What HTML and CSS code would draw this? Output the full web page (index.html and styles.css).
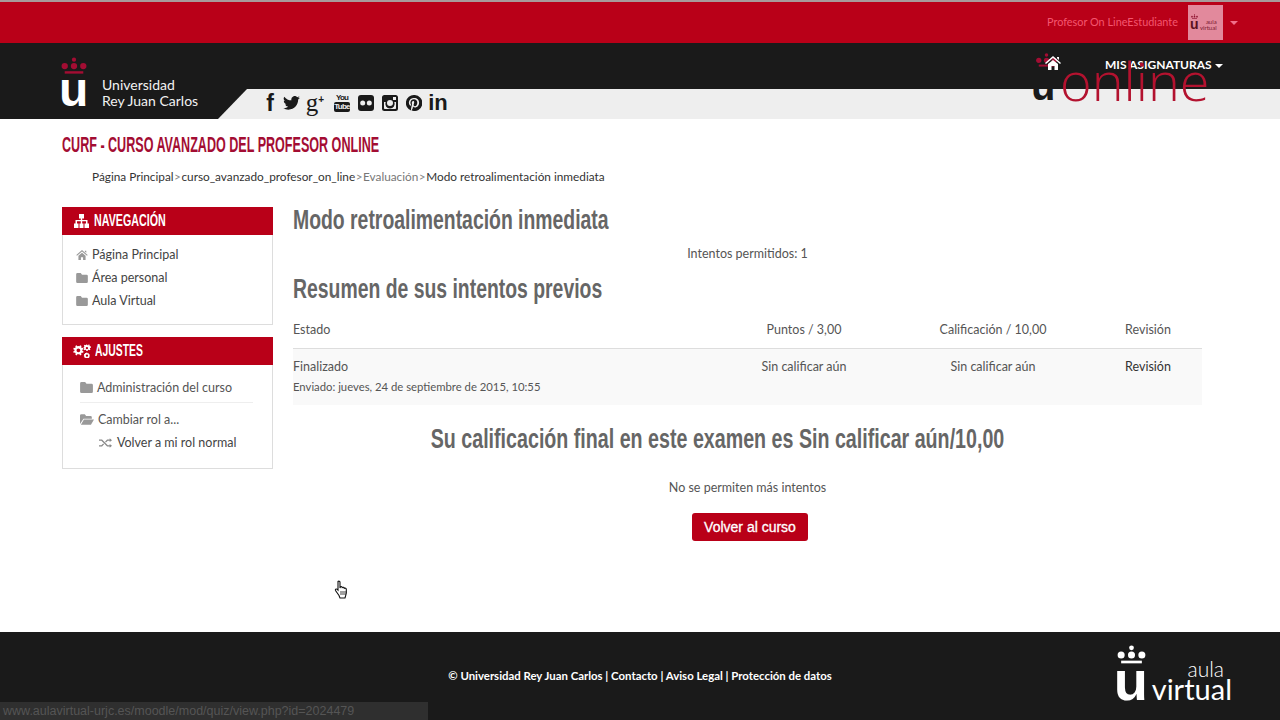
FILE: index.html
```html
<!DOCTYPE html>
<html lang="es">
<head>
    <meta charset="UTF-8">
    <title>CURF - Curso avanzado del profesor online</title>
    <link rel="stylesheet" href="styles.css">
</head>
<body>

    <svg class="defs" width="0" height="0">
        <symbol id="crown" viewBox="0 0 28 22">
            <circle cx="14" cy="2.6" r="2.3"/>
            <circle cx="4" cy="9.5" r="3.4"/>
            <circle cx="14" cy="9.5" r="3.4"/>
            <circle cx="24" cy="9.5" r="3.4"/>
            <rect x="4" y="15" width="20" height="2.6"/>
        </symbol>
        <symbol id="folder" viewBox="0 0 14 12">
            <path d="M1.5 0h4l1.5 2h5.5a1.5 1.5 0 0 1 1.500 1.500v7a1.500 1.500 0 0 1-1.500 1.500h-11a1.500 1.500 0 0 1-1.500-1.500v-9a1.500 1.500 0 0 1 1.500-1.500z"/>
        </symbol>
    </svg>

    <!-- Top bar -->
    <div class="topbar">
        <span class="user-name">Profesor On LineEstudiante</span>
        <div class="avatar">
            <svg class="avatar-crown" width="7" height="6"><use href="#crown"/></svg>
            <span class="avatar-u">u</span>
            <span class="avatar-text">aula<br>virtual</span>
        </div>
        <span class="caret caret-user"></span>
    </div>

    <!-- Logo and social bar -->
    <header class="brandbar">
        <div class="brand">
            <div class="brand-mark">
                <svg class="brand-crown" width="26" height="21"><use href="#crown"/></svg>
                <span class="brand-u">u</span>
            </div>
            <div class="brand-name">Universidad<br>Rey Juan Carlos</div>
        </div>
        <div class="social">
            <span class="slot"><span class="s-f">f</span></span>
            <span class="slot slot-tw">
                <svg width="17" height="14" viewBox="0 0 24 20"><path d="M24 2.400a10 10 0 0 1-2.800.8 5 5 0 0 0 2.200-2.700 10 10 0 0 1-3.100 1.200 4.900 4.900 0 0 0-8.400 4.500A14 14 0 0 1 1.700.9a4.900 4.900 0 0 0 1.500 6.600 4.900 4.900 0 0 1-2.200-.6c0 2.400 1.700 4.400 3.900 4.900a4.900 4.900 0 0 1-2.200.1 4.900 4.900 0 0 0 4.600 3.400A10 10 0 0 1 0 17.300 14 14 0 0 0 7.500 19.500c9.100 0 14.300-7.700 14-14.600A10 10 0 0 0 24 2.400z"/></svg>
            </span>
            <span class="slot slot-gp"><span class="s-g">g<sup>+</sup></span></span>
            <span class="slot">
                <span class="s-yt"><span class="yt-you">You</span><span class="yt-tube">Tube</span></span>
            </span>
            <span class="slot">
                <svg width="16" height="16" viewBox="0 0 16 16"><rect width="16" height="16" rx="3"/><circle cx="4.700" cy="8" r="2.500" fill="#eee"/><circle cx="11.300" cy="8" r="2.500" fill="#eee"/></svg>
            </span>
            <span class="slot">
                <svg width="16" height="16" viewBox="0 0 16 16"><path fill-rule="evenodd" d="M2.500 0h11A2.500 2.500 0 0 1 16 2.500v11a2.500 2.500 0 0 1-2.500 2.500h-11A2.500 2.500 0 0 1 0 13.500v-11A2.500 2.500 0 0 1 2.500 0zM11 2v3h3V2zM2 7v6.200c0 .5.300.8.800.8h10.400c.5 0 .8-.3.800-.8V7h-1.700a4.700 4.700 0 1 1-8.600 0zM8 5a3 3 0 1 0 0 6 3 3 0 0 0 0-6z"/></svg>
            </span>
            <span class="slot">
                <svg width="16" height="16" viewBox="0 0 16 16"><path fill-rule="evenodd" d="M8 0a8 8 0 0 0-2.900 15.500c-.1-.6-.1-1.600 0-2.300l.9-4s-.2-.5-.2-1.200c0-1.100.6-1.900 1.400-1.900.7 0 1 .5 1 1.100 0 .7-.4 1.700-.6 2.600-.2.800.4 1.400 1.200 1.400 1.400 0 2.500-1.500 2.500-3.700 0-1.900-1.400-3.300-3.300-3.300-2.300 0-3.600 1.700-3.600 3.500 0 .7.300 1.400.6 1.800v.3l-.2.900c0 .1-.1.200-.3.100-1-.5-1.600-1.900-1.600-3.100 0-2.500 1.800-4.800 5.300-4.800 2.800 0 4.900 2 4.900 4.600 0 2.800-1.700 5-4.200 5-.8 0-1.600-.4-1.800-.9l-.5 1.900c-.2.700-.7 1.500-1 2A8 8 0 1 0 8 0z"/></svg>
            </span>
            <span class="slot"><span class="s-in">in</span></span>
        </div>
        <div class="course-menu">MIS ASIGNATURAS <span class="caret"></span></div>
        <div class="online-logo">
            <svg class="online-crown" width="27" height="17"><use href="#crown"/></svg>
            <span class="online-u">u</span>
            <span class="online-word">online</span>
            <svg class="online-home" width="16" height="14" viewBox="0 0 16 14"><path d="M8 0l8 7-1 1-7-6-7 6-1-1zM3 8l5-4 5 4v6H9.500v-4h-3v4H3zM12 1h2v3l-2-1.700z"/></svg>
        </div>
    </header>

    <div class="page">
        <h1 class="course-title">CURF - CURSO AVANZADO DEL PROFESOR ONLINE</h1>
        <div class="breadcrumb">
            <span>Página Principal</span><i>&gt;</i><span>curso_avanzado_profesor_on_line</span><i>&gt;</i><span class="muted">Evaluación</span><i>&gt;</i><span>Modo retroalimentación inmediata</span>
        </div>

        <div class="columns">
            <aside class="sidebar">
                <div class="block">
                    <div class="block-head">
                        <svg width="17" height="14" viewBox="0 0 17 14"><path d="M6 0h5v4.500H9.200V6h5.300v3.500H16V14h-4.500V9.500h1.500V7.300H9.200v2.200h1.300V14H6.500V9.500h1.300V7.300H4v2.200h1.500V14H1V9.500h1.500V6h5.300V4.500H6z"/></svg>
                        <span class="head-nav">NAVEGACIÓN</span>
                    </div>
                    <ul class="nav-list">
                        <li>
                            <svg width="12" height="10" viewBox="0 0 16 14"><path d="M8 0l8 7-1 1-7-6-7 6-1-1zM3 8l5-4 5 4v6H9.500v-4h-3v4H3zM12 1h2v3l-2-1.700z"/></svg>
                            <span>Página Principal</span>
                        </li>
                        <li><svg width="12" height="10"><use href="#folder"/></svg><span>Área personal</span></li>
                        <li><svg width="12" height="10"><use href="#folder"/></svg><span>Aula Virtual</span></li>
                    </ul>
                </div>
                <div class="block">
                    <div class="block-head">
                        <svg width="18" height="14" viewBox="0 0 20 15"><path fill-rule="evenodd" d="M6 2l1.200.2.700-1.200 1.600.9-.5 1.300.9 1 1.300-.4.500 1.800-1.300.4v1.400l1.300.4-.5 1.800-1.300-.4-.9 1 .5 1.300-1.600.9-.7-1.200L6 11l-1.200.2-.7 1.200-1.600-.9.500-1.300-.9-1-1.300.4L.3 7.800l1.300-.4V6L.3 5.600.8 3.800l1.300.4.900-1-.5-1.300L4.100 1l.7 1.200zM6 4.600a2.100 2.100 0 1 0 0 4.200 2.100 2.100 0 0 0 0-4.200z"/><path fill-rule="evenodd" d="M15.500 0l.5 1 1.100.1.300-1 1.300.6-.4 1 .8.800 1-.4v1.800l-1 .1-.4 1 .7.800-1.100 1-.8-.7-1 .3-.2 1h-1.500l-.2-1-1-.4-.8.7-1-1.100.7-.8-.3-1-1-.2V3.400l1-.1.400-1-.6-.8 1.200-1 .8.700z M15.500 3a1.300 1.300 0 1 0 0 2.600 1.300 1.300 0 0 0 0-2.600z"/><path fill-rule="evenodd" d="M15.500 9l.6.900 1-.2.500 1 .9.400-.2 1.100.5.900-.7.800-.1 1.100-1 .2-.7.800-1-.4-1 .3-.7-.8-1-.3v-1l-.7-.8.500-.9-.2-1 1-.5.400-1 1.100.1zM15.500 11.300a1.300 1.300 0 1 0 0 2.600 1.300 1.300 0 0 0 0-2.600z"/></svg>
                        <span class="head-set">AJUSTES</span>
                    </div>
                    <ul class="settings-list">
                        <li class="settings-top"><svg width="13" height="11"><use href="#folder"/></svg><span>Administración del curso</span></li>
                        <li class="settings-open">
                            <svg width="14" height="11" viewBox="0 0 16 12"><path d="M1.500 0h4L7 2h5a1.500 1.500 0 0 1 1.500 1.500V5H4L0 11V1.500A1.500 1.500 0 0 1 1.500 0zM4.500 6H16l-3.500 6H1z"/></svg>
                            <span>Cambiar rol a...</span>
                        </li>
                        <li class="settings-sub">
                            <svg width="13" height="10" viewBox="0 0 14 10" fill="none" stroke-width="1.300"><path d="M0 2h3l6 6h3M0 8h3l2-2M7 4l2-2h3"/><path class="arrow" d="M11.500 0L14 2l-2.500 2zM11.500 6L14 8l-2.500 2z"/></svg>
                            <span>Volver a mi rol normal</span>
                        </li>
                    </ul>
                </div>
            </aside>

            <main class="content">
                <h2 class="heading">Modo retroalimentación inmediata</h2>
                <p class="allowed">Intentos permitidos: 1</p>
                <h2 class="heading heading-summary">Resumen de sus intentos previos</h2>

                <div class="attempts">
                    <div class="attempts-row attempts-head">
                        <div>Estado</div>
                        <div class="cell-c">Puntos / 3,00</div>
                        <div class="cell-c">Calificación / 10,00</div>
                        <div class="cell-c">Revisión</div>
                    </div>
                    <div class="attempts-row attempts-body">
                        <div>
                            <div>Finalizado</div>
                            <div class="submitted">Enviado: jueves, 24 de septiembre de 2015, 10:55</div>
                        </div>
                        <div class="cell-c">Sin calificar aún</div>
                        <div class="cell-c">Sin calificar aún</div>
                        <div class="cell-c cell-link">Revisión</div>
                    </div>
                </div>

                <h3 class="final-grade">Su calificación final en este examen es Sin calificar aún/10,00</h3>
                <p class="no-more">No se permiten más intentos</p>
                <div class="actions"><button class="btn-back">Volver al curso</button></div>
            </main>
        </div>
    </div>

    <footer class="footer">
        <div></div>
        <div class="footer-links">© Universidad Rey Juan Carlos | Contacto | Aviso Legal | Protección de datos</div>
        <div class="footer-logo">
            <div class="footer-mark">
                <svg class="footer-crown" width="29" height="23"><use href="#crown"/></svg>
                <span class="footer-u">u</span>
            </div>
            <div class="footer-word"><span class="w-aula">aula</span><span class="w-virtual">virtual</span></div>
        </div>
    </footer>

    <!-- Browser link preview, lies over the footer -->
    <div class="statusbar">www.aulavirtual-urjc.es/moodle/mod/quiz/view.php?id=2024479</div>

    <!-- Mouse pointer -->
    <svg class="pointer" width="16" height="20" viewBox="0 0 16 20"><path d="M4 1.500c.8-.8 2-.3 2 .8V8l.5-1.200c.9-.4 1.700 0 1.800.8.800-.6 1.800-.2 2 .7.900-.5 1.900 0 2 1 .2 2 .2 4.500-.6 6.200l-.7 2.500H6l-1-2.500-3.500-5c-.5-1 .5-2 1.500-1.300l1 1z" fill="#fff" stroke="#111" stroke-width="1.100"/><path d="M7 11v4M9 11v4M11 11v4" stroke="#111" fill="none" stroke-width=".8"/></svg>

</body>
</html>
```

FILE: styles.css
```css
* {
    box-sizing: border-box;
}

html, body {
    margin: 0;
    padding: 0;
    height: 720px;
    overflow: hidden;
}

body {
    display: flex;
    flex-direction: column;
    position: relative;
    font-family: "Lato", "Liberation Sans", sans-serif;
    font-size: 12.5px;
    color: #555;
    background: #fff;
}

.defs {
    position: absolute;
}

/* Top bar */
.topbar {
    height: 43px;
    flex: none;
    display: flex;
    align-items: center;
    justify-content: flex-end;
    padding-right: 42px;
    background: #b90018;
    border-top: 2px solid #a89a9a;
}

.user-name {
    color: #f4566f;
    font-size: 10.9px;
    margin: 0 10px 3px 0;
}

.avatar {
    position: relative;
    width: 35px;
    height: 35px;
    background: #e2899c;
    margin-right: 7px;
}

.avatar-crown {
    position: absolute;
    left: 3px;
    top: 9px;
    fill: #8d1430;
}

.avatar-u {
    position: absolute;
    left: 2px;
    top: 11px;
    font: bold 14px/16px "Liberation Sans", sans-serif;
    color: #5a1020;
}

.avatar-text {
    position: absolute;
    left: 12px;
    top: 14px;
    font-size: 6px;
    line-height: 6px;
    text-align: right;
    color: #7a1a30;
}

.caret {
    display: inline-block;
    width: 0;
    height: 0;
    border-left: 4px solid transparent;
    border-right: 4px solid transparent;
    border-top: 4px solid #fff;
    vertical-align: middle;
}

.caret-user {
    border-top-color: #f0708a;
}

/* Logo and social bar */
.brandbar {
    position: relative;
    height: 76px;
    flex: none;
    display: flex;
    background: #1a1a1a;
}

.brand {
    width: 218px;
    flex: none;
    display: flex;
    padding-left: 61px;
}

.brand-mark {
    position: relative;
    width: 26px;
}

.brand-crown {
    position: absolute;
    left: 0;
    top: 14px;
    fill: #a30d33;
}

.brand-u {
    position: absolute;
    left: -2px;
    top: 23px;
    font: bold 48px/48px "Liberation Sans", sans-serif;
    color: #fff;
}

.brand-name {
    margin: 34px 0 0 15px;
    color: #f2f2f2;
    font-size: 14px;
    line-height: 16px;
    white-space: nowrap;
}

.social {
    flex: 1;
    margin-top: 46px;
    padding: 0 0 3px 40px;
    display: flex;
    align-items: center;
    background: #eee;
    clip-path: polygon(29px 0, 100% 0, 100% 100%, 0 100%);
    color: #1a1a1a;
    fill: #1a1a1a;
}

.slot {
    width: 24px;
    flex: none;
    display: flex;
    justify-content: center;
    align-items: center;
}

.slot-tw {
    width: 18px;
}

.slot-gp {
    width: 30px;
}

.s-f {
    font: bold 23px/20px "Liberation Sans", sans-serif;
}

.s-g {
    font: 25px/20px "Liberation Serif", serif;
}

.s-g sup {
    font: bold 10px/10px "Liberation Sans", sans-serif;
    vertical-align: 8px;
}

.s-yt {
    display: flex;
    flex-direction: column;
    align-items: center;
    width: 16px;
    font: bold 8px/8px "Liberation Sans", sans-serif;
    letter-spacing: -0.8px;
}

.yt-you {
    line-height: 8px;
}

.yt-tube {
    width: 16px;
    height: 10px;
    line-height: 10px;
    text-align: center;
    background: #1a1a1a;
    color: #eee;
    border-radius: 2px;
}

.s-in {
    font: bold 22px/20px "Liberation Sans", sans-serif;
}

/* The online logo sits over both bars */
.online-logo {
    position: absolute;
    left: 1033px;
    top: 10px;
    width: 180px;
    height: 50px;
    fill: #a30d33;
}

.online-crown {
    position: absolute;
    left: 0;
    top: 0;
}

.online-home {
    position: absolute;
    left: 12px;
    top: 3px;
    fill: #fff;
}

.online-u {
    position: absolute;
    left: -2px;
    top: 13px;
    font: bold 40px/40px "Liberation Sans", sans-serif;
    color: #1a1a1a;
}

.online-word {
    position: absolute;
    left: 27px;
    top: -3px;
    font: 300 54px/60px "Open Sans", sans-serif;
    color: #b3122f;
}

.course-menu {
    position: absolute;
    left: 1105px;
    top: 14px;
    font: bold 12px/16px "Lato", sans-serif;
    color: #fff;
    white-space: nowrap;
}

/* Page */
.page {
    flex: 1;
    padding: 0 78px 0 62px;
}

.course-title {
    margin: 14px 0 0;
    font: bold 22px/24px "Liberation Sans", sans-serif;
    color: #a30d33;
    white-space: nowrap;
    transform: scaleX(0.571);
    transform-origin: left;
}

.breadcrumb {
    margin: 11px 0 0 30px;
    font-size: 11.8px;
    line-height: 18px;
    color: #333;
    white-space: nowrap;
}

.breadcrumb i {
    font-style: normal;
    margin: 0 0.5px;
    color: #888;
}

.muted {
    color: #777;
}

.columns {
    display: grid;
    grid-template-columns: 211px 909px;
    column-gap: 20px;
    margin-top: 21px;
}

/* Sidebar blocks */
.block {
    border: 1px solid #ddd;
    border-top: none;
    margin-bottom: 12px;
}

.block-head {
    height: 28px;
    margin: 0 -1px;
    display: flex;
    align-items: center;
    gap: 4px;
    padding-left: 11px;
    background: #b90018;
    color: #fff;
    fill: #fff;
    font: bold 17px/28px "Liberation Sans", sans-serif;
}

.head-nav,
.head-set {
    white-space: nowrap;
    transform-origin: left;
}

.head-nav {
    transform: scaleX(0.63);
}

.head-set {
    transform: scaleX(0.61);
}

.nav-list,
.settings-list {
    list-style: none;
    margin: 0;
    padding: 0;
}

.nav-list {
    padding: 8px 0 12px 13px;
    color: #444;
}

.nav-list li {
    display: flex;
    align-items: center;
    gap: 4px;
    height: 23px;
}

.nav-list svg,
.settings-list svg {
    fill: #999;
    stroke: none;
}

.settings-list {
    padding: 11px 19px 14px 17px;
}

.settings-list li {
    display: flex;
    align-items: center;
    gap: 4px;
    height: 23px;
}

.settings-top {
    border-bottom: 1px solid #eee;
    height: 27px !important;
    padding-bottom: 4px;
}

.settings-open {
    margin-top: 5px;
}

.settings-sub {
    padding-left: 19px;
    color: #444;
    gap: 5px !important;
}

.settings-sub svg {
    stroke: #888;
    fill: none;
}

.settings-sub .arrow {
    fill: #888;
    stroke: none;
}

/* Main column */
.content {
    margin-top: -2px;
}

.heading {
    margin: 0;
    font: bold 27px/30px "Liberation Sans", sans-serif;
    color: #666;
    white-space: nowrap;
    transform: scaleX(0.718);
    transform-origin: left;
}

.allowed {
    margin: 10px 0 0;
    line-height: 18px;
    text-align: center;
}

.heading-summary {
    margin-top: 11px;
}

.attempts {
    margin-top: 16px;
}

.attempts-row {
    display: grid;
    grid-template-columns: 423px 176px 202px 108px;
}

.attempts-head {
    height: 29px;
    padding-top: 2px;
    border-bottom: 1px solid #ddd;
}

.attempts-body {
    height: 56px;
    padding-top: 9px;
    background: #f9f9f9;
    line-height: 18px;
}

.cell-c {
    text-align: center;
}

.cell-link {
    color: #333;
}

.submitted {
    margin-top: 2px;
    font-size: 11.3px;
}

.final-grade {
    margin: 18px 60px 0 0;
    font: bold 27px/32px "Liberation Sans", sans-serif;
    color: #666;
    text-align: center;
    white-space: nowrap;
    transform: scaleX(0.728);
}

.no-more {
    margin: 24px 0 0;
    line-height: 18px;
    text-align: center;
}

.actions {
    margin-top: 16px;
    padding-left: 5px;
    text-align: center;
}

.btn-back {
    width: 116px;
    height: 28px;
    padding: 0;
    border: none;
    border-radius: 3px;
    background: #b90018;
    color: #fff;
    font: 14px/28px "Liberation Sans", sans-serif;
    -webkit-text-stroke: 0.3px #fff;
}

/* Footer */
.footer {
    height: 88px;
    flex: none;
    display: grid;
    grid-template-columns: 1fr auto 1fr;
    background: #1a1a1a;
    color: #fff;
}

.footer-links {
    margin-top: 36px;
    font-size: 11.4px;
    font-weight: bold;
    line-height: 16px;
    white-space: nowrap;
}

.footer-logo {
    justify-self: end;
    display: flex;
    padding-right: 48px;
}

.footer-mark {
    position: relative;
    width: 35px;
}

.footer-crown {
    position: absolute;
    left: 0;
    top: 13px;
    fill: #fff;
}

.footer-u {
    position: absolute;
    left: -3px;
    top: 24px;
    font: bold 56px/50px "Liberation Sans", sans-serif;
    color: #fff;
}

.footer-word {
    display: flex;
    flex-direction: column;
    align-items: flex-end;
    padding-top: 29px;
    font-family: "Lato", sans-serif;
}

.w-aula {
    font-size: 21px;
    line-height: 16px;
    margin-right: 8px;
    font-weight: 300;
}

.w-virtual {
    font-size: 29px;
    line-height: 24px;
}

.statusbar {
    position: absolute;
    left: 0;
    bottom: 0;
    width: 428px;
    height: 18px;
    padding-left: 3px;
    background: #2f2f2f;
    color: #555;
    font: 12.500px/18px "Liberation Sans", sans-serif;
    white-space: nowrap;
}

.pointer {
    position: absolute;
    left: 334px;
    top: 580px;
}
```
